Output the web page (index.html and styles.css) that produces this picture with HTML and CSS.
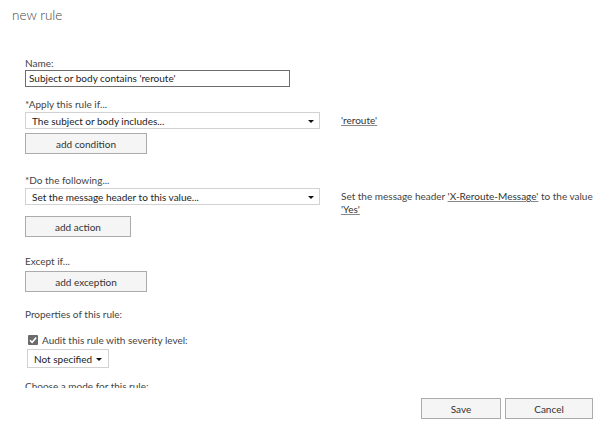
FILE: index.html
```html
<!DOCTYPE html>
<html>
<head>
<meta charset="utf-8">
<link rel="stylesheet" href="styles.css">
</head>
<body>
<div class="dialog">
  <h1 class="title">new rule</h1>
  <div class="scroll">
    <div class="content">
      <div class="label">Name:</div>
      <div class="input">Subject or body contains 'reroute'</div>

      <div class="label mt11">*Apply this rule if...</div>
      <div class="row">
        <div class="select wide"><span>The subject or body includes...</span><span class="arrow"></span></div>
        <div class="desc"><a class="link">'reroute'</a></div>
      </div>
      <button class="btn b-cond">add condition</button>

      <div class="label mt20">*Do the following...</div>
      <div class="row">
        <div class="select wide"><span>Set the message header to this value...</span><span class="arrow"></span></div>
        <div class="desc">Set the message header <a class="link">'X-Reroute-Message'</a> to the value <a class="link">'Yes'</a></div>
      </div>
      <button class="btn b-action">add action</button>

      <div class="label mt18">Except if...</div>
      <button class="btn b-exc">add exception</button>

      <div class="label mt16">Properties of this rule:</div>
      <div class="check-row">
        <span class="checkbox"><svg width="10" height="10" viewBox="0 0 10 10"><path d="M2 5.2 L4.1 7.3 L8.2 2.6" fill="none" stroke="#fff" stroke-width="1.6"/></svg></span>
        <span>Audit this rule with severity level:</span>
      </div>
      <div class="select small"><span>Not specified</span><span class="arrow"></span></div>

      <div class="label mt12">Choose a mode for this rule:</div>
      <div class="label">Enforce</div>
    </div>
  </div>
  <div class="footer">
    <button class="btn save">Save</button>
    <button class="btn cancel">Cancel</button>
  </div>
</div>
</body>
</html>
```

FILE: styles.css
```css
* { box-sizing: border-box; }
html, body { margin: 0; padding: 0; background: #fff; }
body {
  font-family: Lato, "Noto Sans", sans-serif;
  font-size: 10px;
  color: #333;
}
.dialog { width: 595px; height: 424px; display: flex; flex-direction: column; }
.title {
  margin: 0;
  padding: 6px 0 0 12px;
  height: 57px;
  font-size: 13.5px;
  font-weight: 300;
  color: #444;
  line-height: 18px;
}
.scroll { height: 331px; overflow: hidden; }
.content { padding-left: 25px; }
.label { line-height: 13px; height: 13px; color: #444; white-space: nowrap; }
.mt11 { margin-top: 11px; }
.mt20 { margin-top: 20px; }
.mt18 { margin-top: 18px; }
.mt16 { margin-top: 16px; }
.mt12 { margin-top: 12px; }
.input {
  width: 265px;
  height: 17px;
  border: 1px solid #6d6d6d;
  padding: 0 3px;
  line-height: 15px;
  color: #222;
  white-space: nowrap;
}
.row { display: flex; align-items: flex-start; margin-top: 1px; }
.select {
  display: flex;
  align-items: center;
  justify-content: space-between;
  border: 1px solid #d2d2d2;
  height: 17px;
  padding: 0 5px 0 6px;
  color: #222;
  white-space: nowrap;
}
.select.wide { width: 295px; flex: none; }
.select.small { width: 82px; height: 19px; margin: 3px 0 0 2px; padding-left: 6px; padding-right: 6px; }
.arrow {
  width: 0; height: 0;
  border-left: 3px solid transparent;
  border-right: 3px solid transparent;
  border-top: 3px solid #111;
  margin-top: 1px;
}
.desc { margin-left: 21px; padding-top: 2px; line-height: 13px; width: 252px; color: #444; }
.link { color: #333; text-decoration: underline; text-decoration-color: #888; }
.btn {
  display: block;
  font-family: inherit;
  font-size: 10px;
  color: #333;
  background: #f5f5f5;
  border: 1px solid #ababab;
  height: 21px;
  padding: 0;
}
.b-cond { width: 122px; margin-top: 4px; }
.b-action { width: 106px; margin-top: 0; }
.b-exc { width: 122px; margin-top: 3px; }
.check-row { display: flex; align-items: center; margin-top: 12px; height: 13px; color: #444; white-space: nowrap; }
.checkbox {
  width: 10px; height: 10px;
  margin-left: 3px; margin-right: 4px;
  background: #6b6b6b;
  border-radius: 1px;
  display: inline-flex;
}
.footer {
  display: flex;
  justify-content: flex-end;
  gap: 4px;
  padding: 10px 2px 0 0;
}
.save { width: 80px; }
.cancel { width: 88px; }
```
